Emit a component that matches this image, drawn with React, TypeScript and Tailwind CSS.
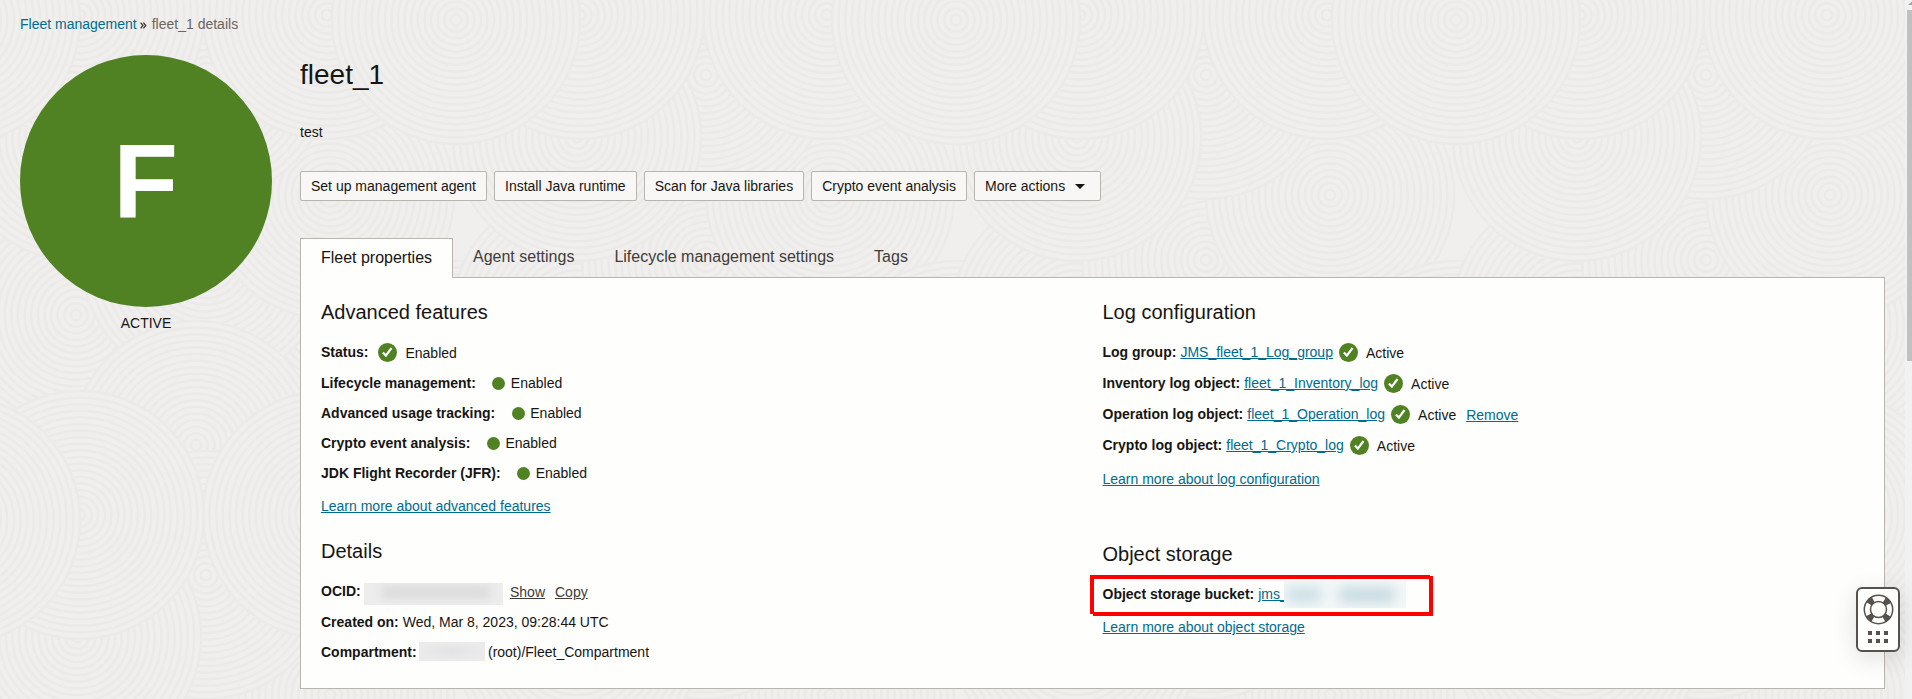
import React from "react";

const RINGS: [number, number][] = [];
for (let tx = 0; tx < 4; tx++) {
  for (let ty = 0; ty < 2; ty++) {
    const ox = tx * 500 - 44;
    const oy = ty * 500 + 15;
    RINGS.push([ox, oy + 370], [ox + 120, oy + 300], [ox + 370, oy + 310], [ox + 250, oy + 245]);
    RINGS.push([ox + 374, oy + 180], [ox + 250, oy + 60], [ox + 371, oy], [ox + 121, oy + 122]);
    RINGS.push([ox + 124, oy], [ox, oy + 5], [ox + 240, oy + 430]);
  }
}
const RADII = Array.from({ length: 19 }, (_, i) => 124 - i * 6.6);

function Backdrop() {
  return (
    <svg className="absolute inset-0 h-full w-full" aria-hidden="true">
      {RINGS.map(([x, y], i) => (
        <g key={i} fill="none" stroke="#ebeae8" strokeWidth="2.6">
          {RADII.map((r, j) => (
            <circle key={j} cx={x} cy={y} r={r} fill={j === 0 ? "#f0efed" : "none"} />
          ))}
        </g>
      ))}
    </svg>
  );
}

function Check() {
  return (
    <svg className="mt-px h-[19px] w-[19px] shrink-0" viewBox="0 0 19 19">
      <circle cx="9.5" cy="9.5" r="9.5" fill="#508223" />
      <path d="M4.9 9.4l3 3.2 5.6-7.6" fill="none" stroke="#fff" strokeWidth="2.2" />
    </svg>
  );
}

const link = "text-[#006b8f] underline";

function Label({ children }: { children: React.ReactNode }) {
  return <span className="font-bold">{children}</span>;
}

function Feature({ label }: { label: string }) {
  return (
    <div className="flex h-[30px] items-start">
      <Label>{label}</Label>
      <span className="mt-1 ml-[16.4px] mr-[5.6px] h-[13px] w-[13px] rounded-full bg-[#508223]" />
      <span>Enabled</span>
    </div>
  );
}

function LogRow({ label, name, remove }: { label: string; name: string; remove?: boolean }) {
  return (
    <div className="flex h-[31px] items-start">
      <Label>{label}</Label>
      <a className="ml-1 mr-1.5 text-[#006b8f] underline">{name}</a>
      <Check />
      <span className="mt-px ml-2">Active</span>
      {remove && <a className="mt-px ml-2.5 text-[#006b8f] underline">Remove</a>}
    </div>
  );
}

function Lifebuoy() {
  return (
    <svg className="h-[31px] w-[31px]" viewBox="0 0 31 31" fill="none" stroke="#55514d">
      <circle cx="15.5" cy="15.5" r="11.2" strokeWidth="6.5" strokeDasharray="6 11.593" strokeDashoffset="-5.8" />
      <circle cx="15.5" cy="15.5" r="14.2" strokeWidth="1.5" />
      <circle cx="15.5" cy="15.5" r="8" strokeWidth="1.5" />
    </svg>
  );
}

const BUTTONS = ["Set up management agent", "Install Java runtime", "Scan for Java libraries", "Crypto event analysis"];
const button = "flex h-[30px] items-center rounded-[2px] border border-[#b8b5ae] bg-[#f8f7f5] px-2.5";

export default function App() {
  return (
    <div className="relative flex h-[699px] w-[1912px] overflow-hidden bg-[#f0efed] font-['Liberation_Sans',Arial,sans-serif] text-[14px] leading-5 text-[#161513]">
      <Backdrop />
      <div className="relative flex min-w-0 flex-1 flex-col pl-5 pt-3.5">
        <nav className="flex h-[41px]">
          <a className="text-[#006b8f]">Fleet management</a>
          <svg className="ml-[3px] mr-[5px] mt-[8px] h-[7px] w-[7px]" viewBox="0 0 7 7" fill="none" stroke="#3a3632" strokeWidth="1.3">
            <path d="M.6.6L3 3.5.6 6.4M3.4.6l2.4 2.9-2.4 2.9" />
          </svg>
          <span className="text-[#6b6560]">fleet_1 details</span>
        </nav>
        <div className="flex">
          <aside className="flex w-[252px] flex-col items-center">
            <div className="flex h-[252px] w-[252px] items-center justify-center rounded-full bg-[#508223] pr-px text-[106px] font-bold leading-none text-white">
              F
            </div>
            <span className="mt-[6px]">ACTIVE</span>
          </aside>
          <main className="ml-7 flex w-[1585px] flex-col">
            <h1 className="mt-[4px] h-[63px] text-[28px] leading-8">fleet_1</h1>
            <p className="h-[49px]">test</p>
            <div className="flex h-[67px] gap-[7px]">
              {BUTTONS.map((b) => (
                <button key={b} className={button}>{b}</button>
              ))}
              <button className={button}>
                More actions
                <svg className="ml-2.5 mr-[5px] h-[5px] w-[10px]" viewBox="0 0 10 5">
                  <path d="M0 0h10L5 5z" fill="#161513" />
                </svg>
              </button>
            </div>
            <div className="flex h-10 text-base leading-6 text-[#3f3c39]">
              <div className="relative z-10 flex w-[153px] justify-center border border-b-0 border-[#b8b5ae] bg-[#fefefc] pt-[7px] text-[#161513]">Fleet properties</div>
              <div className="px-5 pt-[7px]">Agent settings</div>
              <div className="px-5 pt-[7px]">Lifecycle management settings</div>
              <div className="px-5 pt-[7px]">Tags</div>
            </div>
            <section className="-mt-px flex h-[412px] border border-[#b8b5ae] bg-[#fefefc] pl-5">
              <div className="w-[781.5px] pt-[22px]">
                <h2 className="h-[42px] text-[20px] leading-6">Advanced features</h2>
                <div className="flex h-[31px] items-start">
                  <Label>Status:</Label>
                  <span className="ml-2.5"><Check /></span>
                  <span className="mt-px ml-2">Enabled</span>
                </div>
                <Feature label="Lifecycle management:" />
                <Feature label="Advanced usage tracking:" />
                <Feature label="Crypto event analysis:" />
                <Feature label="JDK Flight Recorder (JFR):" />
                <div className="mt-[3px] h-[43px]"><a className={link}>Learn more about advanced features</a></div>
                <h2 className="h-[42px] text-[20px] leading-6">Details</h2>
                <div className="flex h-[31px] items-start">
                  <Label>OCID:</Label>
                  <span className="mt-[2px] ml-[3px] mr-[7.3px] flex h-[22px] w-[139px] overflow-hidden bg-[#ededed]">
                    <span className="mt-0.5 ml-4 h-3.5 w-28 rounded-full bg-[#dcdcdc] blur-[5px]" />
                  </span>
                  <a className="mt-px text-[#3f3c39] underline">Show</a>
                  <a className="mt-px ml-2.5 text-[#3f3c39] underline">Copy</a>
                </div>
                <div className="h-[30px]"><Label>Created on:</Label> Wed, Mar 8, 2023, 09:28:44 UTC</div>
                <div className="flex h-5">
                  <Label>Compartment:</Label>
                  <span className="ml-[2.3px] mr-[3px] h-[19px] w-[66px] bg-[#ebebeb] bg-[radial-gradient(closest-side,#e3e3e3,#ebebeb)]" />
                  <span>(root)/Fleet_Compartment</span>
                </div>
              </div>
              <div className="relative pt-[22px]">
                <h2 className="h-[42px] text-[20px] leading-6">Log configuration</h2>
                <LogRow label="Log group:" name="JMS_fleet_1_Log_group" />
                <LogRow label="Inventory log object:" name="fleet_1_Inventory_log" />
                <LogRow label="Operation log object:" name="fleet_1_Operation_log" remove />
                <LogRow label="Crypto log object:" name="fleet_1_Crypto_log" />
                <div className="mt-[3px] h-[73px]"><a className={link}>Learn more about log configuration</a></div>
                <h2 className="h-[42px] text-[20px] leading-6">Object storage</h2>
                <div className="flex h-[33px] items-start">
                  <Label>Object storage bucket:</Label>
                  <a className="ml-1 text-[#006b8f] underline">jms_</a>
                  <span className="relative -mt-[3px] -ml-[4px] flex h-[27px] w-[122px] overflow-hidden bg-[#f3f7f8]">
                    <span className="mt-1.5 ml-0.5 h-4 w-9 shrink-0 rounded-full bg-[#cde0e6] blur-[6px]" />
                    <span className="mt-1.5 ml-4 h-4 w-[58px] shrink-0 rounded-full bg-[#c8dce2] blur-[6px]" />
                  </span>
                </div>
                <a className={link}>Learn more about object storage</a>
                <svg className="absolute -left-[12.5px] top-[297px] h-[42px] w-[343px]" fill="#ff0000">
                  <path d="M0 0H340V1H343V41H3V39H0ZM4 4V37H339V4Z" fillRule="evenodd" />
                </svg>
              </div>
            </section>
          </main>
        </div>
      </div>
      <div className="relative flex w-[7px] flex-col items-end bg-[#f1f1f1]">
        <svg className="h-[10px] w-[5px]" viewBox="0 0 5 10">
          <path d="M5 1.5V5H1z" fill="#a3a3a3" />
        </svg>
        <div className="h-[351px] w-[5px] bg-[#c1c1c1]" />
      </div>
      <div className="absolute left-[1856px] top-[587px] z-20 flex h-[65px] w-[44px] flex-col items-center rounded-[6px] border-2 border-[#55514d] bg-[#fefefc] pt-[5px] shadow-[0_6px_24px_rgba(0,0,0,0.12)]">
        <Lifebuoy />
        <div className="mt-[6px] grid grid-cols-3 gap-1">
          {[0, 1, 2, 3, 4, 5].map((i) => (
            <span key={i} className="h-1 w-1 bg-[#55514d]" />
          ))}
        </div>
      </div>
    </div>
  );
}
